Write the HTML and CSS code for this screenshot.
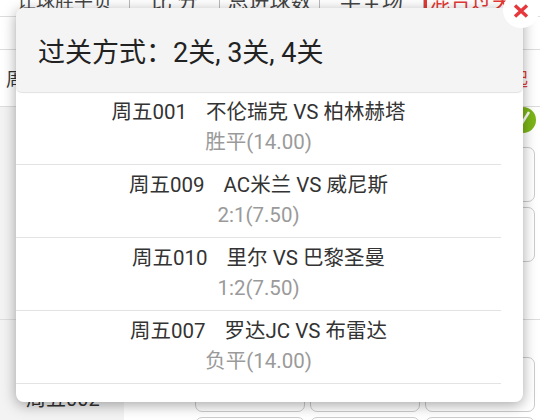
FILE: index.html
```html
<!DOCTYPE html>
<html lang="zh-CN">
<head>
<meta charset="utf-8">
<title>过关方式</title>
<link rel="stylesheet" href="styles.css">
</head>
<body>
<div class="page">
  <div class="tabs">
    <div class="tab t1">让球胜平负</div>
    <div class="tab t2">比 分</div>
    <div class="tab t3">总进球数</div>
    <div class="tab t4">半全场</div>
    <div class="tab t5 active">混合过关</div>
  </div>
  <div class="day">
    <span class="day-title">周五 共12场比赛</span>
    <span class="day-toggle">收起</span>
  </div>
  <div class="match">
    <div class="match-info">周五001</div>
    <div class="odds">
      <span class="badge"><svg width="26" height="26" viewBox="0 0 26 26"><path d="M19 5 L9 21" stroke="#fff" stroke-width="2.4" fill="none"/></svg></span>
      <div class="odd">1.85</div><div class="odd">3.30</div><div class="odd">3.60</div>
      <div class="odd">3.75</div><div class="odd">3.50</div><div class="odd">1.75</div>
    </div>
  </div>
  <div class="match">
    <div class="match-info">周五002</div>
    <div class="odds">
      <div class="odd">1.85</div><div class="odd">3.05</div><div class="odd">4.00</div>
      <div class="odd">3.70</div><div class="odd">3.45</div><div class="odd">1.78</div>
    </div>
  </div>
</div>

<div class="dialog">
  <div class="dialog-head">过关方式：2关, 3关, 4关</div>
  <div class="list">
    <div class="item">
      <div class="teams"><span class="no">周五001</span>不伦瑞克 VS 柏林赫塔</div>
      <div class="pick">胜平(14.00)</div>
    </div>
    <div class="item">
      <div class="teams"><span class="no">周五009</span>AC米兰 VS 威尼斯</div>
      <div class="pick">2:1(7.50)</div>
    </div>
    <div class="item">
      <div class="teams"><span class="no">周五010</span>里尔 VS 巴黎圣曼</div>
      <div class="pick">1:2(7.50)</div>
    </div>
    <div class="item">
      <div class="teams"><span class="no">周五007</span>罗达JC VS 布雷达</div>
      <div class="pick">负平(14.00)</div>
    </div>
  </div>
  <div class="close">
    <svg width="16" height="14" viewBox="0 0 16 14"><path d="M2 1.5 L14 12.5 M14 1.5 L2 12.5" stroke="#e6373c" stroke-width="3.4" fill="none"/></svg>
  </div>
</div>
</body>
</html>
```

FILE: styles.css
```css
html, body {
  margin: 0;
  padding: 0;
}
body {
  width: 540px;
  height: 420px;
  overflow: hidden;
  position: relative;
  background: #fff;
  font-family: Roboto, "Noto Sans CJK SC", sans-serif;
}

/* background page */
.page {
  margin-top: -18px;
}
.tabs {
  display: flex;
  height: 34px;
  border-bottom: 1px solid #ddd;
}
.tab {
  display: flex;
  align-items: center;
  justify-content: center;
  font-size: 21px;
  color: #444;
  border-right: 1px solid #bbb;
  box-sizing: border-box;
}
.t1 { width: 130px; font-size: 19px; }
.t2 { width: 90px; }
.t3 { width: 100px; }
.t4 { width: 104px; }
.t5 { flex: 1; }
.tab.active {
  color: #e53935;
  border-left: 3px solid #e53935;
  border-right: none;
  justify-content: flex-start;
  padding-left: 2px;
}
.day {
  margin-top: 32px;
  height: 56px;
  border-top: 1px solid #ddd;
  border-bottom: 1px solid #ddd;
  display: flex;
  align-items: center;
  justify-content: space-between;
  padding: 0 12px 0 6px;
  font-size: 18px;
  color: #333;
}
.day-toggle {
  color: #e53935;
}
.match {
  display: grid;
  grid-template-columns: 124px 1fr;
  border-bottom: 1px solid #ddd;
}
.match-info {
  background: #f3f3f3;
  display: flex;
  align-items: flex-end;
  padding: 0 0 10px 26px;
  font-size: 20px;
  color: #333;
}
.match:last-child .match-info {
  align-items: flex-start;
  padding-top: 63px;
}
.odds {
  position: relative;
  display: grid;
  grid-template-columns: repeat(3, 110px);
  gap: 5px;
  padding: 40px 8px 57px 71px;
}
.match:last-child .odds {
  padding-top: 37px;
}
.odd {
  height: 55px;
  border: 1px solid #ccc;
  border-radius: 7px;
  box-sizing: border-box;
  display: flex;
  align-items: center;
  justify-content: center;
  font-size: 18px;
  color: #333;
}
.badge {
  position: absolute;
  right: 7px;
  top: 0;
  width: 26px;
  height: 26px;
  border-radius: 50%;
  background: #7cb518;
  display: flex;
}

/* dialog */
.dialog {
  position: absolute;
  left: 16px;
  top: 8px;
  width: 507px;
  height: 394px;
  background: #fff;
  border-radius: 8px;
  box-shadow: 0 3px 14px rgba(0, 0, 0, 0.35);
}
.dialog-head {
  height: 84px;
  box-sizing: border-box;
  background: #f4f4f4;
  border-radius: 8px 8px 6px 6px;
  box-shadow: 0 1px 1px rgba(0, 0, 0, 0.12);
  display: flex;
  align-items: center;
  padding-left: 22px;
  font-size: 27px;
  color: #222;
}
.list {
  margin-right: 22px;
}
.item {
  padding: 5px 0 7px;
  border-bottom: 1px solid #e3e3e3;
  text-align: center;
}
.teams {
  font-size: 20.5px;
  line-height: 30px;
  color: #333;
}
.no {
  margin-right: 19px;
}
.pick {
  font-size: 20.5px;
  line-height: 30px;
  color: #9a9a9a;
}
.close {
  position: absolute;
  left: 487px;
  top: -16px;
  width: 36px;
  height: 36px;
  border-radius: 50%;
  background: #fff;
  display: flex;
  align-items: center;
  justify-content: center;
  padding-top: 2px;
  box-sizing: border-box;
}
```
